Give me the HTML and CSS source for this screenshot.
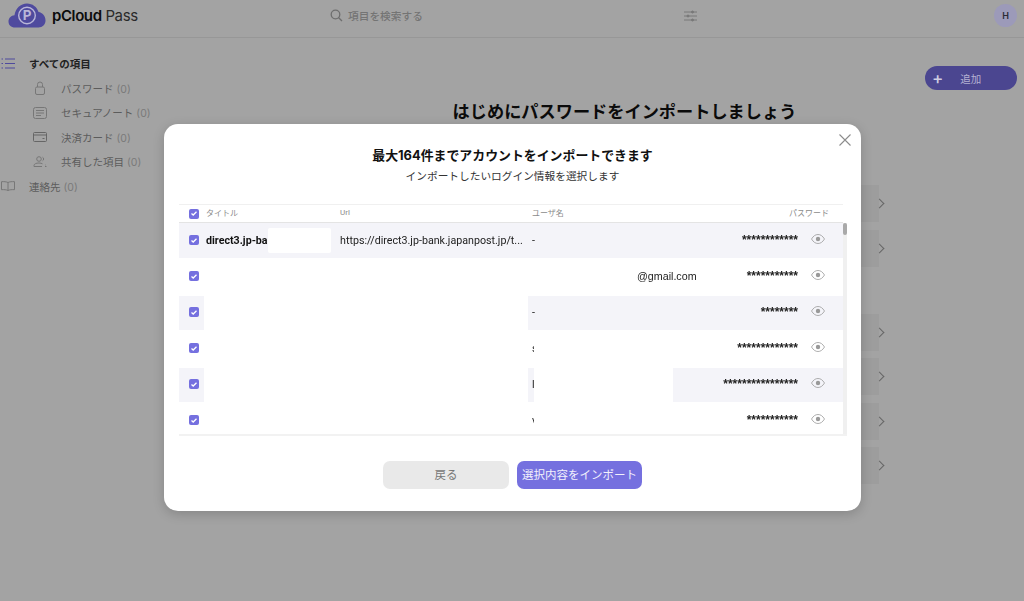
FILE: index.html
```html
<!DOCTYPE html>
<html lang="ja">
<head>
<meta charset="utf-8">
<title>pCloud Pass</title>
<link rel="stylesheet" href="styles.css">
</head>
<body>
<div class="app">
  <header class="topbar">
    <div class="brand">
      <svg class="logo" width="38" height="25" viewBox="0 0 38 25"><path fill="#4f4a9e" d="M7 24.500C3 24.500 0.500 22 0.500 18.500C0.500 15 3 12.500 6.500 12.200C7.500 5.500 12.500 0.500 19 0.500C24.500 0.500 29 4 30.500 9C34.500 9.500 37.500 13 37.500 17.500C37.500 21.500 34.500 24.500 30.500 24.500Z"/><circle cx="19" cy="12.500" r="8.300" fill="none" stroke="#b9b6d8" stroke-width="1.400"/><text x="19" y="17.300" text-anchor="middle" class="logo-p">P</text></svg>
      <span class="brand-name"><b>pCloud</b> Pass</span>
    </div>
    <div class="search">
      <svg width="13" height="13" viewBox="0 0 13 13" fill="none" stroke="#6e6e6e" stroke-width="1.300"><circle cx="5.500" cy="5.500" r="4.300"/><path d="M8.700 8.700L12 12"/></svg>
      <span>項目を検索する</span>
    </div>
    <svg class="filter" width="13" height="12" viewBox="0 0 13 12" fill="none" stroke="#787878"><path d="M0 2H13M0 6H13M0 10H13"/><circle cx="8.500" cy="2" r="1" fill="#787878"/><circle cx="4" cy="6" r="1" fill="#787878"/><circle cx="8.500" cy="10" r="1" fill="#787878"/></svg>
    <div class="avatar">H</div>
  </header>
  <div class="workspace">
    <nav class="sidebar">
      <div class="nav-item top active">
        <svg width="14" height="11" viewBox="0 0 14 11" fill="none" stroke="#4f4a9e" stroke-width="1.200"><path d="M4 1H14M4 5.500H14M4 10H14M0.500 1H2M0.500 5.500H2M0.500 10H2"/></svg>
        <span>すべての項目</span>
      </div>
      <div class="nav-item sub">
        <svg width="12" height="14" viewBox="0 0 12 14" fill="none" stroke="#777"><rect x="1.500" y="6" width="9" height="7.500" rx="1.500"/><path d="M3.500 6V3.500a2.500 2.500 0 0 1 5 0V6"/></svg>
        <span>パスワード <em>(0)</em></span>
      </div>
      <div class="nav-item sub">
        <svg width="14" height="12" viewBox="0 0 14 12" fill="none" stroke="#777"><rect x="0.500" y="0.500" width="13" height="11" rx="2"/><path d="M3 3.500H11M3 6H11M3 8.500H8"/></svg>
        <span>セキュアノート <em>(0)</em></span>
      </div>
      <div class="nav-item sub">
        <svg width="14" height="10" viewBox="0 0 14 10" fill="none" stroke="#666"><rect x="0.500" y="0.500" width="13" height="9" rx="1"/><path d="M0.500 3H13.500M9.500 6.500H11.500" stroke-width="1.200"/></svg>
        <span>決済カード <em>(0)</em></span>
      </div>
      <div class="nav-item sub">
        <svg width="14" height="11" viewBox="0 0 14 11" fill="none" stroke="#777"><circle cx="6" cy="3" r="2.300"/><path d="M1 10.500V9.500C1 8 3 7 6 7C7.500 7 8.500 7.300 9.500 7.800M1 10.500H9"/><path d="M9.500 1.200a2 2 0 0 1 0 3.600M12 9h.5M12 10.500h1.500"/></svg>
        <span>共有した項目 <em>(0)</em></span>
      </div>
      <div class="nav-item top">
        <svg width="14" height="10" viewBox="0 0 14 10" fill="none" stroke="#777"><path d="M7 1.500C5.500 0.700 3 0.500 0.500 0.700V8.700C3 8.500 5.500 8.700 7 9.500C8.500 8.700 11 8.500 13.500 8.700V0.700C11 0.500 8.500 0.700 7 1.500ZM7 1.500V9.500"/></svg>
        <span>連絡先 <em>(0)</em></span>
      </div>
    </nav>
    <main class="content">
      <div class="actions">
        <div class="add-btn"><span class="plus">+</span><span>追加</span></div>
      </div>
      <h1 class="headline">はじめにパスワードをインポートしましょう</h1>
      <div class="tile-group first">
        <div class="tile"></div><div class="tile"></div>
      </div>
      <div class="tile-group">
        <div class="tile"></div><div class="tile"></div><div class="tile"></div><div class="tile"></div>
      </div>
    </main>
  </div>
</div>

<div class="scrim">
  <section class="modal">
    <svg class="close" width="12" height="12" viewBox="0 0 12 12" fill="none" stroke="#8c8c8c" stroke-width="1.100"><path d="M0.500 0.500L11.500 11.500M11.500 0.500L0.500 11.500"/></svg>
    <h2 class="modal-title">最大164件までアカウントをインポートできます</h2>
    <p class="modal-sub">インポートしたいログイン情報を選択します</p>
    <div class="table">
      <div class="thead">
        <span class="cell-check"><span class="check"><svg width="6" height="5" viewBox="0 0 6 5" fill="none" stroke="#fff" stroke-width="1.300"><path d="M0.500 2.500L2.200 4L5.500 0.800"/></svg></span></span>
        <span class="cell-title th">タイトル</span>
        <span class="th">Url</span>
        <span class="cell-user th">ユーザ名</span>
        <span class="cell-pass th">パスワード</span>
      </div>
      <div class="tbody">
        <div class="rows">
          <div class="row tint">
            <span class="cell-check"><span class="check"><svg width="6" height="5" viewBox="0 0 6 5" fill="none" stroke="#fff" stroke-width="1.300"><path d="M0.500 2.500L2.200 4L5.500 0.800"/></svg></span></span>
            <span class="cell-title name">direct3.jp-bank</span>
            <span class="url">https://direct3.jp-bank.japanpost.jp/t...</span>
            <span class="cell-user">-</span>
            <span class="stars">************</span>
            <span class="cell-eye"><svg width="14" height="10" viewBox="0 0 14 10" fill="none" stroke="#9a9a9a" stroke-width="0.800"><path d="M0.500 5C2.500 1.800 4.500 0.500 7 0.500C9.500 0.500 11.500 1.800 13.500 5C11.500 8.200 9.500 9.500 7 9.500C4.500 9.500 2.500 8.200 0.500 5Z"/><circle cx="7" cy="5" r="2.200" fill="#999" stroke="none"/></svg></span>
          </div>
          <div class="row">
            <span class="cell-check"><span class="check"><svg width="6" height="5" viewBox="0 0 6 5" fill="none" stroke="#fff" stroke-width="1.300"><path d="M0.500 2.500L2.200 4L5.500 0.800"/></svg></span></span>
            <span class="cell-title"></span>
            <span></span>
            <span class="cell-user mail">@gmail.com</span>
            <span class="stars">***********</span>
            <span class="cell-eye"><svg width="14" height="10" viewBox="0 0 14 10" fill="none" stroke="#9a9a9a" stroke-width="0.800"><path d="M0.500 5C2.500 1.800 4.500 0.500 7 0.500C9.500 0.500 11.500 1.800 13.500 5C11.500 8.200 9.500 9.500 7 9.500C4.500 9.500 2.500 8.200 0.500 5Z"/><circle cx="7" cy="5" r="2.200" fill="#999" stroke="none"/></svg></span>
          </div>
          <div class="row tint">
            <span class="cell-check"><span class="check"><svg width="6" height="5" viewBox="0 0 6 5" fill="none" stroke="#fff" stroke-width="1.300"><path d="M0.500 2.500L2.200 4L5.500 0.800"/></svg></span></span>
            <span class="cell-title"></span>
            <span></span>
            <span class="cell-user">-</span>
            <span class="stars">********</span>
            <span class="cell-eye"><svg width="14" height="10" viewBox="0 0 14 10" fill="none" stroke="#9a9a9a" stroke-width="0.800"><path d="M0.500 5C2.500 1.800 4.500 0.500 7 0.500C9.500 0.500 11.500 1.800 13.500 5C11.500 8.200 9.500 9.500 7 9.500C4.500 9.500 2.500 8.200 0.500 5Z"/><circle cx="7" cy="5" r="2.200" fill="#999" stroke="none"/></svg></span>
          </div>
          <div class="row">
            <span class="cell-check"><span class="check"><svg width="6" height="5" viewBox="0 0 6 5" fill="none" stroke="#fff" stroke-width="1.300"><path d="M0.500 2.500L2.200 4L5.500 0.800"/></svg></span></span>
            <span class="cell-title"></span>
            <span></span>
            <span class="cell-user">s</span>
            <span class="stars">*************</span>
            <span class="cell-eye"><svg width="14" height="10" viewBox="0 0 14 10" fill="none" stroke="#9a9a9a" stroke-width="0.800"><path d="M0.500 5C2.500 1.800 4.500 0.500 7 0.500C9.500 0.500 11.500 1.800 13.500 5C11.500 8.200 9.500 9.500 7 9.500C4.500 9.500 2.500 8.200 0.500 5Z"/><circle cx="7" cy="5" r="2.200" fill="#999" stroke="none"/></svg></span>
          </div>
          <div class="row tint">
            <span class="cell-check"><span class="check"><svg width="6" height="5" viewBox="0 0 6 5" fill="none" stroke="#fff" stroke-width="1.300"><path d="M0.500 2.500L2.200 4L5.500 0.800"/></svg></span></span>
            <span class="cell-title"></span>
            <span></span>
            <span class="cell-user">l</span>
            <span class="stars">****************</span>
            <span class="cell-eye"><svg width="14" height="10" viewBox="0 0 14 10" fill="none" stroke="#9a9a9a" stroke-width="0.800"><path d="M0.500 5C2.500 1.800 4.500 0.500 7 0.500C9.500 0.500 11.500 1.800 13.500 5C11.500 8.200 9.500 9.500 7 9.500C4.500 9.500 2.500 8.200 0.500 5Z"/><circle cx="7" cy="5" r="2.200" fill="#999" stroke="none"/></svg></span>
          </div>
          <div class="row">
            <span class="cell-check"><span class="check"><svg width="6" height="5" viewBox="0 0 6 5" fill="none" stroke="#fff" stroke-width="1.300"><path d="M0.500 2.500L2.200 4L5.500 0.800"/></svg></span></span>
            <span class="cell-title"></span>
            <span></span>
            <span class="cell-user">v</span>
            <span class="stars">***********</span>
            <span class="cell-eye"><svg width="14" height="10" viewBox="0 0 14 10" fill="none" stroke="#9a9a9a" stroke-width="0.800"><path d="M0.500 5C2.500 1.800 4.500 0.500 7 0.500C9.500 0.500 11.500 1.800 13.500 5C11.500 8.200 9.500 9.500 7 9.500C4.500 9.500 2.500 8.200 0.500 5Z"/><circle cx="7" cy="5" r="2.200" fill="#999" stroke="none"/></svg></span>
          </div>
          <div class="mask mask-name"></div>
          <div class="mask mask-titles"></div>
          <div class="mask mask-users"></div>
        </div>
        <div class="scrollbar"><div class="thumb"></div></div>
      </div>
    </div>
    <div class="modal-actions">
      <div class="btn btn-back">戻る</div>
      <div class="btn btn-primary">選択内容をインポート</div>
    </div>
  </section>
</div>
</body>
</html>
```
FILE: styles.css
```css
* { box-sizing: border-box; }
html, body { margin: 0; height: 100%; }
body {
  background: #a3a3a3;
  font-family: "Inter", "Noto Sans CJK JP", sans-serif;
  color: #111;
  overflow: hidden;
  position: relative;
}
.app { height: 601px; display: flex; flex-direction: column; }

/* top bar */
.topbar {
  height: 38px;
  flex: none;
  border-bottom: 1px solid #979797;
  display: flex;
  align-items: center;
  padding: 0 7px 6px 8px;
}
.brand { display: flex; align-items: center; gap: 6px; width: 322px; flex: none; }
.logo { flex: none; }
.logo-p { font: 700 13.500px "Inter", sans-serif; fill: #b9b6d8; }
.brand-name { font: 400 15px "Inter", sans-serif; letter-spacing: -0.400px; color: #2a2a2a; white-space: nowrap; }
.brand-name b { font-weight: 600; color: #0c0c0c; }
.search { display: flex; align-items: center; gap: 5px; width: 354px; flex: none; font-size: 10.700px; font-weight: 500; color: #747474; }
.filter { flex: none; }
.avatar {
  margin-left: auto;
  width: 23px; height: 23px;
  border-radius: 50%;
  background: #9c9ab9;
  display: flex; align-items: center; justify-content: center;
  font-size: 9px; font-weight: 600; color: #2a2a35;
}

.workspace { flex: 1; display: flex; min-height: 0; }

/* sidebar */
.sidebar { width: 225px; flex: none; padding-top: 13.500px; }
.nav-item { height: 24.500px; display: flex; align-items: center; font-size: 10.500px; color: #5c5c5c; white-space: nowrap; }
.nav-item em { font-style: normal; color: #7a7a7a; }
.nav-item.top { padding-left: 1px; }
.nav-item.top svg { margin-right: 14px; flex: none; }
.nav-item.active { color: #222; font-weight: 600; }
.nav-item.sub { padding-left: 33px; }
.nav-item.sub svg { width: 14px; margin-right: 14px; flex: none; }

/* main */
.content { flex: 1; display: flex; flex-direction: column; align-items: center; padding-top: 28px; }
.actions { align-self: stretch; display: flex; justify-content: flex-end; padding-right: 7px; }
.add-btn {
  width: 92px; height: 24px;
  border-radius: 12px;
  background: #4b4690;
  color: #b4b1d2;
  font-size: 10.500px;
  display: flex; align-items: center;
  padding-left: 7px;
  gap: 17px;
}
.plus { font-size: 17px; font-weight: 500; line-height: 1; color: #cfcde2; }
.headline { margin: 10px 0 0; font-size: 17.200px; line-height: 24px; font-weight: 700; color: #0b0b0b; white-space: nowrap; }
.tile-group { display: flex; flex-direction: column; gap: 7.600px; width: 508px; margin-top: 47px; }
.tile-group.first { margin-top: 61px; }
.tile { height: 37px; background: #9d9d9d; position: relative; }
.tile::after {
  content: "";
  position: absolute;
  right: -4px; top: 15px;
  width: 6px; height: 6px;
  border-top: 1.500px solid #666;
  border-right: 1.500px solid #666;
  transform: rotate(45deg);
}

/* modal */
.scrim { position: absolute; inset: 0; padding: 124px 0 0 164px; }
.modal {
  position: relative;
  width: 697px; height: 387px;
  background: #fff;
  border-radius: 14px;
  box-shadow: 0 3px 12px rgba(0, 0, 0, 0.18);
  padding: 23px 14px 0 15px;
  display: flex; flex-direction: column;
}
.close { position: absolute; right: 10px; top: 10px; }
.modal-title { margin: 0; text-align: center; font-size: 12.900px; line-height: 18px; font-weight: 700; color: #111; padding-right: 1px; }
.modal-sub { margin: 4px 0 0; text-align: center; font-size: 10.700px; line-height: 15px; color: #333; padding-right: 1px; }

.table { margin-top: 20px; width: 668px; font-family: "Roboto", "Noto Sans CJK JP", sans-serif; font-size: 10.700px; border-bottom: 2px solid #f2f2f2; }
.thead, .row {
  display: grid;
  grid-template-columns: 25px 136px 192px 1fr auto 45px;
  align-items: center;
}
.thead {
  width: 664px;
  height: 19px;
  border-top: 1px solid #f0f0f0;
  border-bottom: 1px solid #e4e4e4;
  font-size: 8px;
  color: #8b8b8b;
}
.th { padding-bottom: 2px; }
.thead .cell-pass { grid-column: 5 / 7; padding-right: 14px; text-align: right; }
.tbody { display: flex; height: 211px; }
.rows { position: relative; width: 664px; overflow: hidden; height: 211px; will-change: transform; }
.row { height: 36px; padding-bottom: 2px; }
.row.tint { background: linear-gradient(#f4f4f9, #f4f4f9) no-repeat 0 1px / 100% 34px; }
.row.tint:first-child { background-position: 0 0; background-size: 100% 35px; }
.cell-check { display: flex; justify-content: flex-end; padding-right: 5px; }
.check {
  width: 10px; height: 10px;
  border-radius: 2px;
  background: #7570df;
  display: flex; align-items: center; justify-content: center;
}
.cell-title { padding-left: 2px; overflow: hidden; white-space: nowrap; }
.name { font-weight: 700; color: #111; }
.url { white-space: nowrap; color: #222; }
.cell-user { color: #222; white-space: nowrap; }
.thead .cell-user { color: #8b8b8b; }
.mail { padding-left: 105px; font-family: "Liberation Sans", sans-serif; font-size: 10.700px; }
.stars { font-family: "Liberation Sans", sans-serif; font-size: 12px; font-weight: 700; color: #222; text-align: right; line-height: 1; }
.cell-eye { display: flex; padding: 0 0 2px 13px; }
.mask { position: absolute; background: #fff; }
.mask-name { left: 89px; top: 5px; width: 63px; height: 25px; border-radius: 2px; }
.mask-titles { left: 25px; top: 36px; width: 324px; height: 175px; }
.mask-users { left: 355px; top: 108px; width: 139px; height: 103px; }
.scrollbar { width: 4px; background: #f0f0f0; }
.thumb { height: 12px; background: #a9a9a9; border-radius: 2px; }

.modal-actions { display: flex; justify-content: center; gap: 8px; margin-top: 25px; padding-right: 1px; }
.btn { height: 28px; padding-bottom: 2px; border-radius: 7px; display: flex; align-items: center; justify-content: center; font-size: 11.500px; }
.btn-back { width: 126px; background: #e9e9e9; color: #777; }
.btn-primary { width: 125px; background: #7570df; color: #f2f1fc; }
```
